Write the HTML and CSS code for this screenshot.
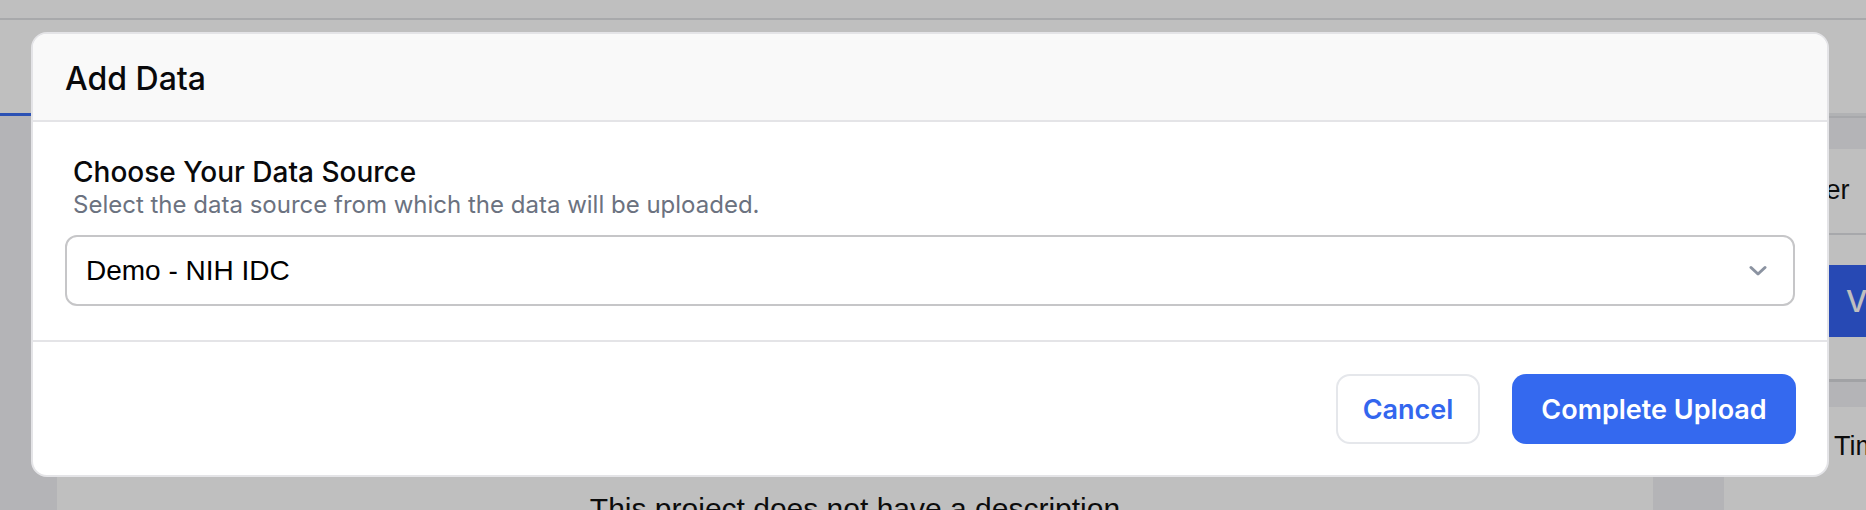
FILE: index.html
```html
<!DOCTYPE html>
<html lang="en">
<head>
  <meta charset="UTF-8" />
  <meta name="viewport" content="width=device-width, initial-scale=1.0"/>
  <title>Add Data</title>
  <link rel="stylesheet" href="styles.css">
</head>
<body>
  <div class="page">
    <div class="topbar"></div>
    <div class="tabs">
      <span class="tab active"></span>
    </div>
    <div class="workspace">
      <aside class="sidebar"></aside>
      <main class="main">
        <p class="empty-desc">This project does not have a description</p>
      </main>
      <div class="gutter"></div>
      <aside class="panel">
        <div class="panel-head"></div>
        <div class="panel-row">Owner</div>
        <div class="panel-action">
          <button type="button" class="btn-view">View</button>
        </div>
        <div class="panel-head small"></div>
        <div class="panel-row">Start Time</div>
      </aside>
    </div>
  </div>

  <div class="overlay"></div>

  <!-- Modal -->
  <div class="modal">
    <div class="modal-header">
      <h2 class="modal-title">Add Data</h2>
    </div>
    <div class="modal-body">
      <div class="field-label">Choose Your Data Source</div>
      <div class="field-help">Select the data source from which the data will be uploaded.</div>
      <div class="select">
        <span class="select-value">Demo - NIH IDC</span>
        <svg class="chevron" width="18" height="12" viewBox="0 0 18 12">
          <path d="M2 2.5 L9 9 L16 2.5" fill="none" stroke="#8b93a1" stroke-width="3" stroke-linecap="round" stroke-linejoin="round"/>
        </svg>
      </div>
    </div>
    <div class="modal-footer">
      <button type="button" class="btn btn-cancel">Cancel</button>
      <button type="button" class="btn btn-primary">Complete Upload</button>
    </div>
  </div>
</body>
</html>
```

FILE: styles.css
```css
body {
  margin: 0;
  padding: 0;
  width: 1866px;
  height: 510px;
  overflow: hidden;
  position: relative;
  font-family: Inter, "Noto Sans", sans-serif;
  background: #ffffff;
}

/* page behind the modal */
.page { display: flex; flex-direction: column; height: 510px; }
.topbar { height: 18px; border-bottom: 2px solid #e0e2e5; flex: none; }
.tabs {
  height: 93px; flex: none;
  display: flex; align-items: flex-end;
  border-bottom: 3px solid #eceef1;
}
.tab {
  width: 140px; height: 30px;
  border-bottom: 3px solid #3a6df0;
  margin-bottom: -3px;
}
.workspace {
  flex: 1;
  display: grid;
  grid-template-columns: 57px 1596px 71px 1fr;
}
.sidebar, .gutter { background: #f0f1f5; }
.main { background: #ffffff; display: flex; justify-content: center; }
.empty-desc {
  margin: 376px 0 0 0;
  font-family: "Liberation Sans", Arial, sans-serif;
  font-size: 30px;
  color: #111;
}
.panel { background: #ffffff; display: flex; flex-direction: column; }
.panel-head { height: 31px; background: #f0f1f5; border-top: 2px solid #dfe1e5; }
.panel-head.small { height: 25px; border-top: 3px solid #d7d9dd; }
.panel-row {
  font-family: "Liberation Sans", Arial, sans-serif;
  font-size: 27px; color: #111;
  padding: 24px 0 0 46px;
  height: 61px;
  box-sizing: border-box;
}
.panel-row:nth-of-type(2) { height: 86px; padding-top: 26px; border-bottom: 2px solid #dfe1e5; }
.panel-action { padding: 30px 0 42px 16px; }
.btn-view {
  width: 260px; height: 72px;
  border: none; background: #3462f1; color: white;
  font-family: Inter, sans-serif; font-size: 30px; font-weight: 500;
  text-align: left; padding-left: 106px;
}

.overlay {
  position: absolute; inset: 0;
  background: rgba(0, 0, 0, 0.25);
}

/* modal */
.modal {
  position: absolute;
  left: 31px; top: 32px;
  width: 1798px; height: 445px;
  box-sizing: border-box;
  background: #ffffff;
  border: 2px solid #e4e4e7;
  border-radius: 16px;
  overflow: hidden;
  display: flex; flex-direction: column;
}
.modal-header {
  height: 88px; flex: none;
  box-sizing: border-box;
  background: #f9f9f9;
  border-bottom: 2px solid #e4e4e7;
  display: flex; align-items: center;
  padding: 2px 32px 0;
}
.modal-title {
  margin: 0;
  font-size: 32px; font-weight: 500;
  color: #09090b;
}
.modal-body {
  padding: 33px 32px 34px 32px;
  border-bottom: 2px solid #e4e4e7;
}
.field-label {
  padding-left: 8px;
  font-size: 28px; font-weight: 500; line-height: 34px;
  color: #09090b;
}
.field-help {
  padding-left: 8px;
  font-size: 24px; line-height: 32px;
  color: #6b7280;
  margin-bottom: 14px;
}
.select {
  height: 71px;
  box-sizing: border-box;
  border: 2px solid #c6c6c8;
  border-radius: 12px;
  display: flex; align-items: center; justify-content: space-between;
  padding: 0 26px 0 19px;
}
.select-value {
  font-family: "Liberation Sans", Arial, sans-serif;
  font-size: 28px; color: #000;
}
.modal-footer {
  flex: 1;
  display: flex; justify-content: flex-end; align-items: flex-start;
  gap: 32px;
  padding: 32px 31px 0 0;
}
.btn {
  height: 70px;
  box-sizing: border-box;
  border-radius: 14px;
  font-family: Inter, sans-serif;
  font-size: 27px; font-weight: 600;
  cursor: pointer;
}
.btn-cancel {
  width: 144px;
  background: #ffffff;
  border: 2px solid #e5e7eb;
  color: #3366ee;
}
.btn-primary {
  width: 284px;
  background: #3469ef;
  border: none;
  color: #ffffff;
}
```
